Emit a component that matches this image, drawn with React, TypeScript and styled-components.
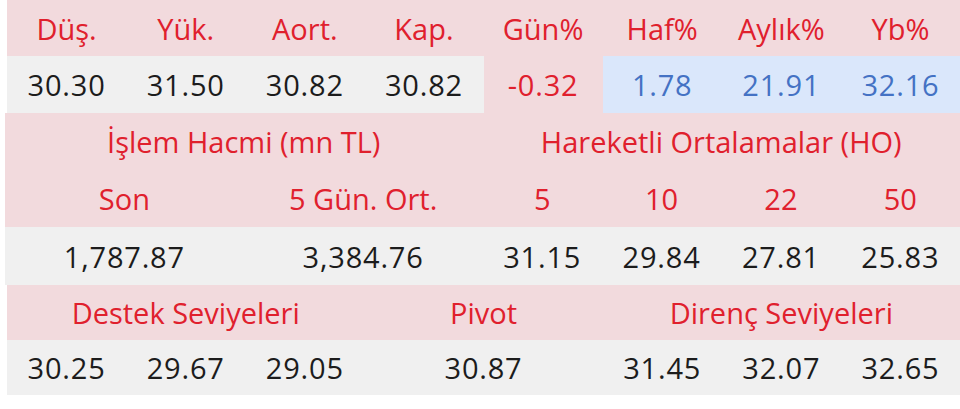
import React from 'react';
import styled, { createGlobalStyle } from 'styled-components';

const GlobalStyle = createGlobalStyle`
    html, body {
        margin: 0;
        padding: 0;
        background: #ffffff;
    }
    body {
        font-family: 'Open Sans', 'Noto Sans', sans-serif;
    }
`;

const COLORS = {
    pink: '#f2dadd',
    grey: '#f0f0f0',
    blue: '#dae7fb',
    red: '#e0202d',
    blueText: '#4472c4',
    ink: '#1c1c1c',
};

type Tone = 'head' | 'data' | 'neg' | 'pos';

const toneBg: Record<Tone, string> = {
    head: COLORS.pink,
    data: COLORS.grey,
    neg: COLORS.pink,
    pos: COLORS.blue,
};

const toneFg: Record<Tone, string> = {
    head: COLORS.red,
    data: COLORS.ink,
    neg: COLORS.red,
    pos: COLORS.blueText,
};

const Page = styled.div`
    width: 960px;
    display: flex;
    flex-direction: column;
`;

const Block = styled.div<{ $inset: number }>`
    display: grid;
    grid-template-columns: repeat(8, 1fr);
    margin-left: ${p => p.$inset}px;
`;

const Cell = styled.div<{ $tone: Tone; $span?: number; $h: number }>`
    grid-column: span ${p => p.$span ?? 1};
    height: ${p => p.$h}px;
    display: flex;
    align-items: center;
    justify-content: center;
    background: ${p => toneBg[p.$tone]};
    color: ${p => toneFg[p.$tone]};
    font-size: 29px;
    line-height: 1;
    letter-spacing: ${p => (p.$tone === 'head' ? 0 : 0.8)}px;
    white-space: nowrap;
`;

const row = (items: string[], tone: Tone, h: number) =>
    items.map((t, i) => (
        <Cell key={t + i} $tone={tone} $h={h}>
            {t}
        </Cell>
    ));

export default function App() {
    return (
        <Page>
            <GlobalStyle />

            <Block $inset={7}>
                {row(['Düş.', 'Yük.', 'Aort.', 'Kap.', 'Gün%', 'Haf%', 'Aylık%', 'Yb%'], 'head', 56)}
                {row(['30.30', '31.50', '30.82', '30.82'], 'data', 57)}
                <Cell $tone="neg" $h={57}>-0.32</Cell>
                {row(['1.78', '21.91', '32.16'], 'pos', 57)}
            </Block>

            <Block $inset={5}>
                <Cell $tone="head" $span={4} $h={57}>İşlem Hacmi (mn TL)</Cell>
                <Cell $tone="head" $span={4} $h={57}>Hareketli Ortalamalar (HO)</Cell>
                <Cell $tone="head" $span={2} $h={57}>Son</Cell>
                <Cell $tone="head" $span={2} $h={57}>5 Gün. Ort.</Cell>
                {row(['5', '10', '22', '50'], 'head', 57)}
                <Cell $tone="data" $span={2} $h={58}>1,787.87</Cell>
                <Cell $tone="data" $span={2} $h={58}>3,384.76</Cell>
                {row(['31.15', '29.84', '27.81', '25.83'], 'data', 58)}
            </Block>

            <Block $inset={7}>
                <Cell $tone="head" $span={3} $h={55}>Destek Seviyeleri</Cell>
                <Cell $tone="head" $span={2} $h={55}>Pivot</Cell>
                <Cell $tone="head" $span={3} $h={55}>Direnç Seviyeleri</Cell>
                {row(['30.25', '29.67', '29.05'], 'data', 55)}
                <Cell $tone="data" $span={2} $h={55}>30.87</Cell>
                {row(['31.45', '32.07', '32.65'], 'data', 55)}
            </Block>
        </Page>
    );
}
